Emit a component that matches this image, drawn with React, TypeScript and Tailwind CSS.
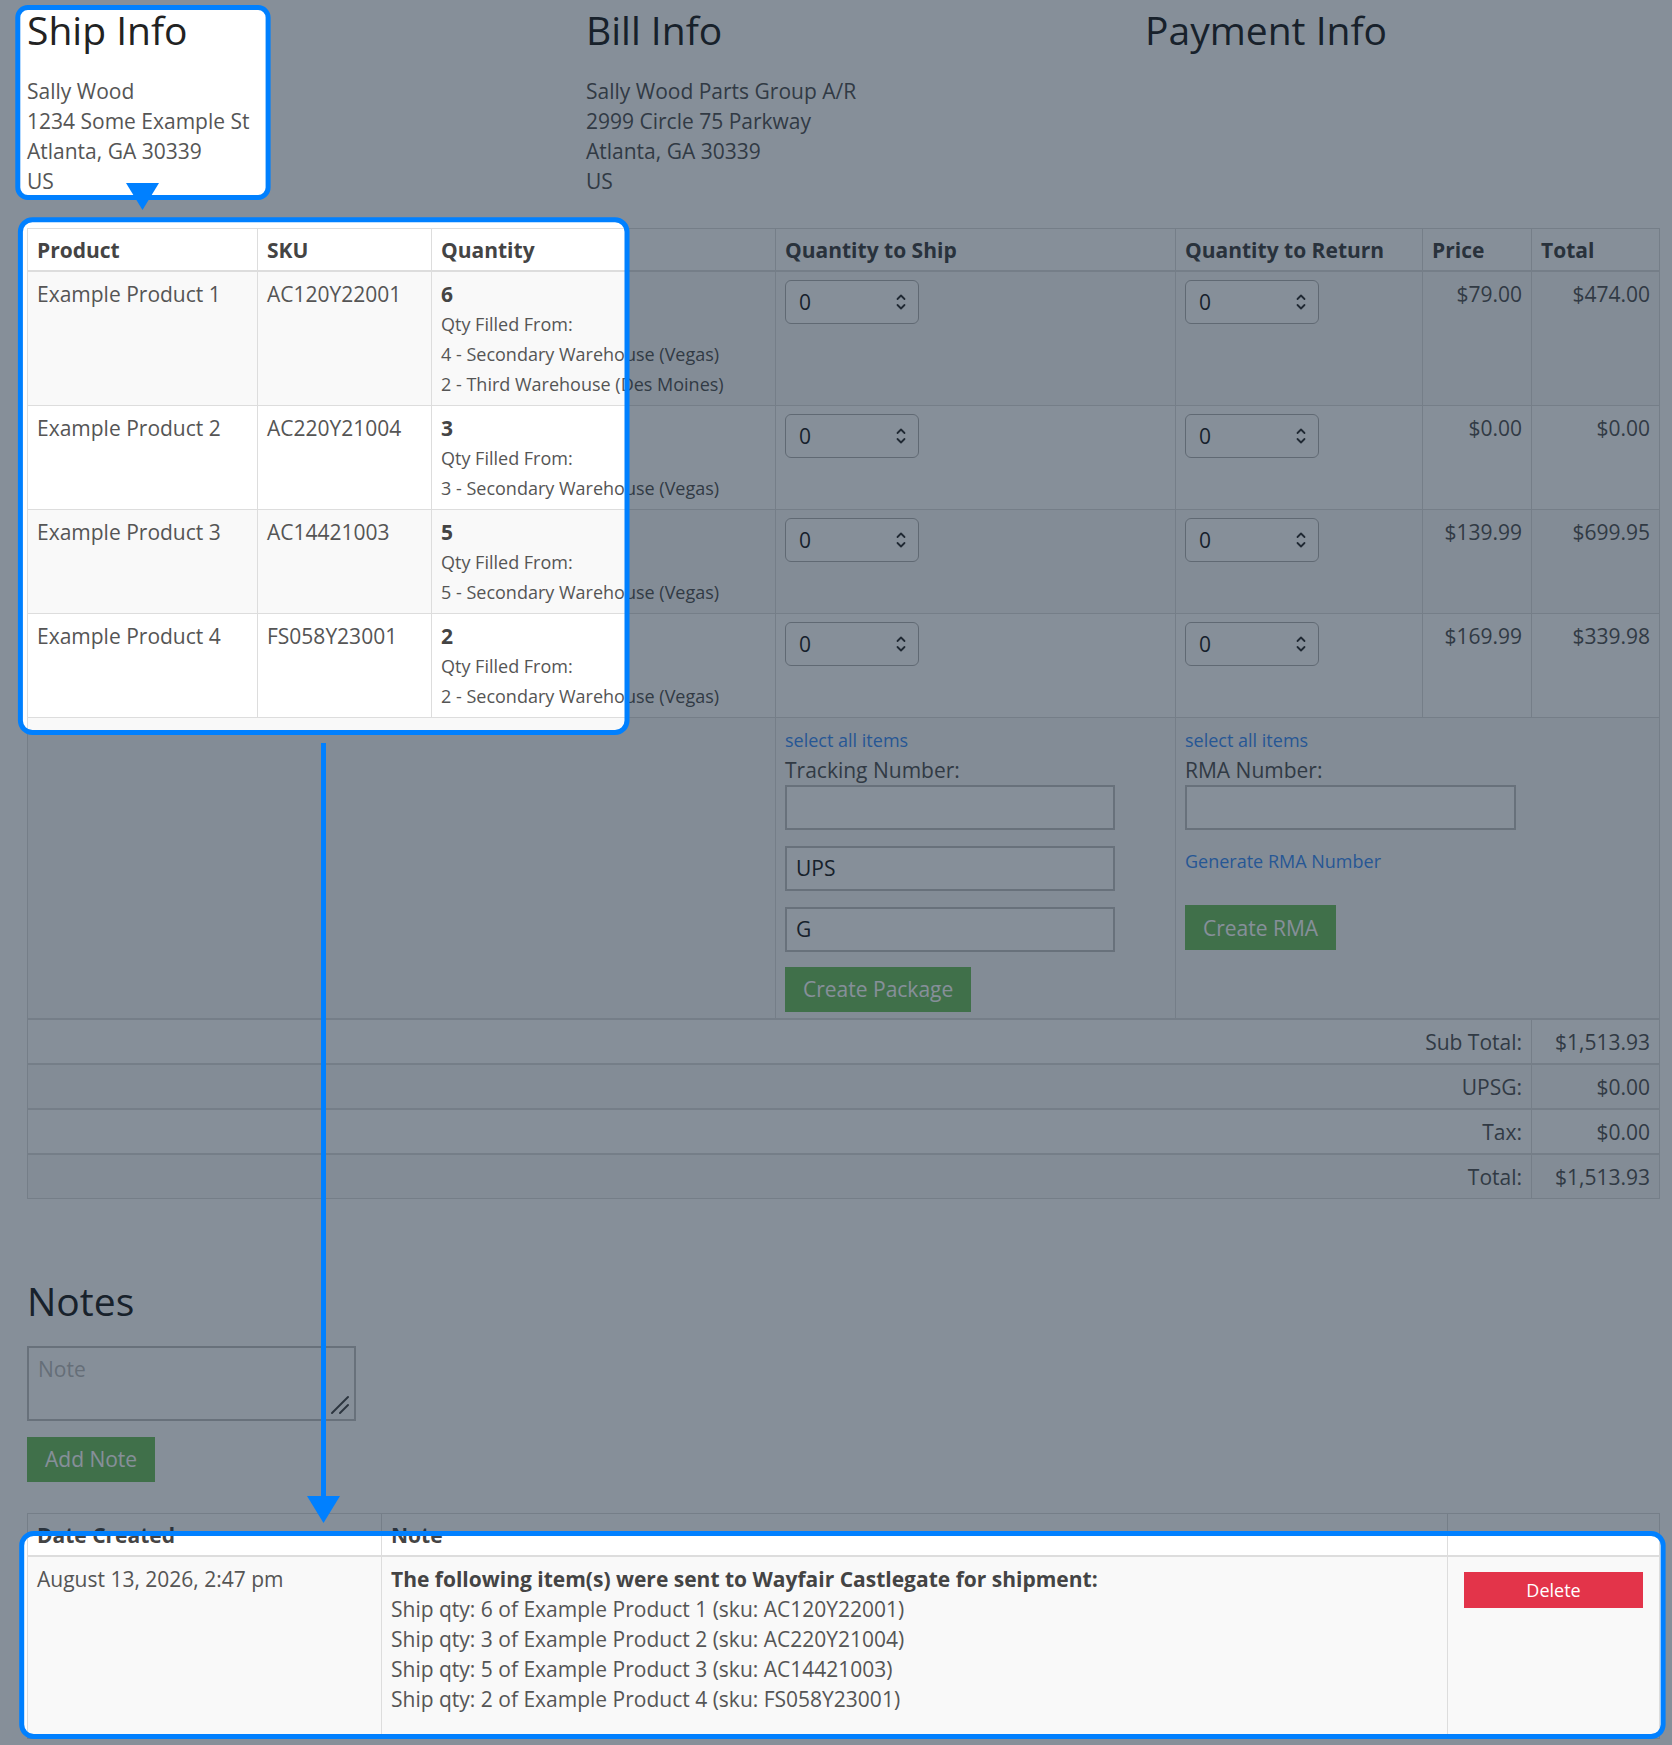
import React from "react";

const rows = [
  {
    name: "Example Product 1",
    sku: "AC120Y22001",
    qty: 6,
    from: ["4 - Secondary Warehouse (Vegas)", "2 - Third Warehouse (Des Moines)"],
    price: "$79.00",
    total: "$474.00",
  },
  { name: "Example Product 2", sku: "AC220Y21004", qty: 3, from: ["3 - Secondary Warehouse (Vegas)"], price: "$0.00", total: "$0.00" },
  { name: "Example Product 3", sku: "AC14421003", qty: 5, from: ["5 - Secondary Warehouse (Vegas)"], price: "$139.99", total: "$699.95" },
  { name: "Example Product 4", sku: "FS058Y23001", qty: 2, from: ["2 - Secondary Warehouse (Vegas)"], price: "$169.99", total: "$339.98" },
];

const totals = [
  ["Sub Total:", "$1,513.93"],
  ["UPSG:", "$0.00"],
  ["Tax:", "$0.00"],
  ["Total:", "$1,513.93"],
];

function rr(x: number, y: number, w: number, h: number, r: number) {
  return `M${x + r} ${y} H${x + w - r} A${r} ${r} 0 0 1 ${x + w} ${y + r} V${y + h - r} A${r} ${r} 0 0 1 ${x + w - r} ${y + h} H${x + r} A${r} ${r} 0 0 1 ${x} ${y + h - r} V${y + r} A${r} ${r} 0 0 1 ${x + r} ${y} Z`;
}

function Spinner() {
  return (
    <div className="flex h-[44px] w-[134px] items-center justify-between rounded-[6px] border-[1.5px] border-[#b3b3b3] bg-white pl-[13px] pr-[12px] text-[#222]">
      <span>0</span>
      <svg width="10" height="18" viewBox="0 0 10 18" fill="none" stroke="#333" strokeWidth="1.8" strokeLinecap="round" strokeLinejoin="round">
        <path d="M1.5 6 5 2.5 8.5 6" />
        <path d="M1.5 12 5 15.5 8.5 12" />
      </svg>
    </div>
  );
}

function GreenButton({ children }: { children: React.ReactNode }) {
  return (
    <div className="inline-flex h-[45px] items-center bg-[#72c060] px-[18px] text-white">{children}</div>
  );
}

const td = "border border-[#dddddd] px-[9px] pt-[7px] pb-[6px] align-top";
const th = "border border-[#dddddd] border-b-2 px-[9px] pt-[6px] pb-[5px] text-left font-bold text-[#444]";

export default function App() {
  const holes = [rr(17.8, 7.5, 250.3, 190, 10), rr(20.4, 219.8, 606.6, 512.7, 12), rr(21.7, 1533.5, 1641.4, 203, 12)];
  const overlay = `M0 0 H1672 V1745 H0 Z ` + holes.join(" ");

  return (
    <div className="relative h-[1745px] w-[1672px] overflow-hidden bg-white font-['Open_Sans',sans-serif] text-[21px] leading-[30px] text-[#555]">
      <div className="pl-[27px]">
        {/* Info header */}
        <div className="grid grid-cols-[559px_559px_500px]">
          <div>
            <h2 className="pt-[8px] pb-[24px] text-[39px] leading-[44px] text-[#222]">Ship Info</h2>
            <div>Sally Wood</div>
            <div>1234 Some Example St</div>
            <div>Atlanta, GA 30339</div>
            <div>US</div>
          </div>
          <div>
            <h2 className="pt-[8px] pb-[24px] text-[39px] leading-[44px] text-[#222]">Bill Info</h2>
            <div>Sally Wood Parts Group A/R</div>
            <div>2999 Circle 75 Parkway</div>
            <div>Atlanta, GA 30339</div>
            <div>US</div>
          </div>
          <div>
            <h2 className="pt-[8px] pb-[24px] text-[39px] leading-[44px] text-[#222]">Payment Info</h2>
          </div>
        </div>

        {/* Items */}
        <table className="mt-[32px] w-[1632px] table-fixed border-collapse">
          <colgroup>
            <col className="w-[230px]" />
            <col className="w-[174px]" />
            <col className="w-[344px]" />
            <col className="w-[400px]" />
            <col className="w-[247px]" />
            <col className="w-[109px]" />
            <col className="w-[128px]" />
          </colgroup>
          <thead>
            <tr>
              <th className={th}>Product</th>
              <th className={th}>SKU</th>
              <th className={th}>Quantity</th>
              <th className={th}>Quantity to Ship</th>
              <th className={th}>Quantity to Return</th>
              <th className={th}>Price</th>
              <th className={th}>Total</th>
            </tr>
          </thead>
          <tbody>
            {rows.map((r, i) => (
              <tr key={r.sku} className={i % 2 === 0 ? "bg-[#f9f9f9]" : "bg-white"}>
                <td className={td}>{r.name}</td>
                <td className={td}>{r.sku}</td>
                <td className={td}>
                  <div className="font-bold text-[#444]">{r.qty}</div>
                  <div className="text-[18px]">Qty Filled From:</div>
                  {r.from.map((f) => (
                    <div key={f} className="whitespace-nowrap text-[18px]">{f}</div>
                  ))}
                </td>
                <td className={`${td} pt-[8px]`}>
                  <Spinner />
                </td>
                <td className={`${td} pt-[8px]`}>
                  <Spinner />
                </td>
                <td className={`${td} text-right`}>{r.price}</td>
                <td className={`${td} text-right`}>{r.total}</td>
              </tr>
            ))}
            <tr className="bg-[#f9f9f9]">
              <td className={td} colSpan={3}></td>
              <td className={td}>
                <div className="text-[18px] text-[#3f8ef5]">select all items</div>
                <div>Tracking Number:</div>
                <div className="flex flex-col gap-[16.5px]">
                  <div className="h-[44.5px] w-[330px] border-2 border-[#c2c2c2] bg-white" />
                  <div className="flex h-[44.5px] w-[330px] items-center border-2 border-[#c2c2c2] bg-white px-[9px] text-[#222]">UPS</div>
                  <div className="flex h-[44.5px] w-[330px] items-center border-2 border-[#c2c2c2] bg-white px-[9px] text-[#222]">G</div>
                </div>
                <div className="mt-[15px]">
                  <GreenButton>Create Package</GreenButton>
                </div>
              </td>
              <td className={td} colSpan={3}>
                <div className="text-[18px] text-[#3f8ef5]">select all items</div>
                <div>RMA Number:</div>
                <div className="h-[44.5px] w-[331px] border-2 border-[#c2c2c2] bg-white" />
                <div className="mt-[16.5px] text-[18px] text-[#3f8ef5]">Generate RMA Number</div>
                <div className="mt-[29px]">
                  <GreenButton>Create RMA</GreenButton>
                </div>
              </td>
            </tr>
            {totals.map(([label, value], i) => (
              <tr key={label} className={i % 2 === 1 ? "bg-[#f9f9f9]" : "bg-white"}>
                <td className={`${td} border-t-2 pt-[4px] pb-[4px] text-right`} colSpan={6}>
                  {label}
                </td>
                <td className={`${td} border-t-2 pt-[4px] pb-[4px] text-right`}>{value}</td>
              </tr>
            ))}
          </tbody>
        </table>

        {/* Notes */}
        <h2 className="mt-[80px] text-[39px] leading-[44px] text-[#222]">Notes</h2>
        <div className="relative mt-[23px] h-[75px] w-[329px]">
          <textarea
            placeholder="Note"
            className="block h-full w-full resize-none border-2 border-[#c2c2c2] bg-white px-[9px] py-[6px] text-[21px] leading-[30px] outline-none placeholder:text-[#bdbdbd]"
          />
          <svg className="absolute bottom-[6px] right-[6px]" width="20" height="20" viewBox="0 0 20 20" stroke="#4a4a4a" strokeWidth="2" strokeLinecap="round">
            <path d="M18 2 2 18" />
            <path d="M18 10 10 18" />
          </svg>
        </div>
        <div className="mt-[16px]">
          <GreenButton>Add Note</GreenButton>
        </div>

        <table className="mt-[31px] w-[1632px] table-fixed border-collapse">
          <colgroup>
            <col className="w-[354px]" />
            <col className="w-[1066px]" />
            <col className="w-[212px]" />
          </colgroup>
          <thead>
            <tr>
              <th className={th}>Date Created</th>
              <th className={th}>Note</th>
              <th className={th}></th>
            </tr>
          </thead>
          <tbody>
            <tr className="bg-[#f9f9f9]">
              <td className={`${td} pb-[24px]`}>August 13, 2026, 2:47 pm</td>
              <td className={`${td} pb-[24px]`}>
                <div className="font-bold text-[#444]">The following item(s) were sent to Wayfair Castlegate for shipment:</div>
                <div>Ship qty: 6 of Example Product 1 (sku: AC120Y22001)</div>
                <div>Ship qty: 3 of Example Product 2 (sku: AC220Y21004)</div>
                <div>Ship qty: 5 of Example Product 3 (sku: AC14421003)</div>
                <div>Ship qty: 2 of Example Product 4 (sku: FS058Y23001)</div>
              </td>
              <td className={`${td} px-[16px] pb-[24px]`}>
                <div className="mt-[8px] flex h-[36px] w-full items-center justify-center bg-[#e3344a] text-[18px] text-white">Delete</div>
              </td>
            </tr>
          </tbody>
        </table>
      </div>

      {/* Tutorial overlay */}
      <svg className="pointer-events-none absolute left-0 top-0" width="1672" height="1745" viewBox="0 0 1672 1745">
        <path d={overlay} fill="rgba(13,31,51,0.5)" fillRule="evenodd" />
        {holes.map((d, i) => (
          <path key={i} d={d} fill="none" stroke="#0080ff" strokeWidth="5" />
        ))}
        <polygon points="126,183 159,183 142.5,210" fill="#0080ff" />
        <rect x="321" y="743" width="5" height="760" fill="#0080ff" />
        <polygon points="307,1496 340,1496 323.5,1523" fill="#0080ff" />
      </svg>
    </div>
  );
}
